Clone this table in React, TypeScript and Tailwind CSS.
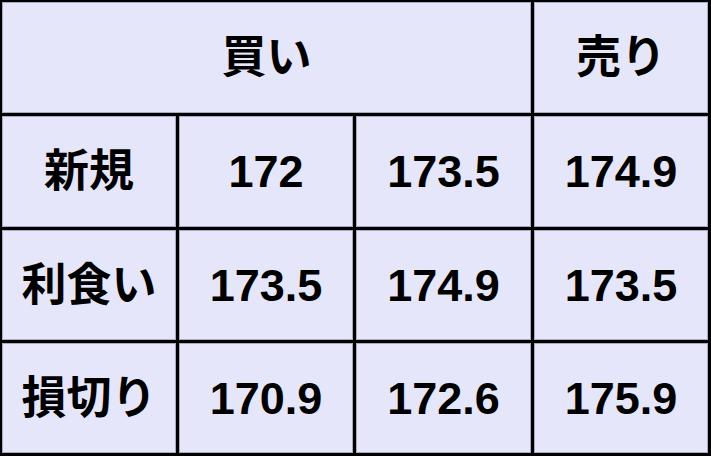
import React from "react";

const font = {
  fontFamily: '"Liberation Sans", "Noto Sans CJK JP", Arial, sans-serif',
};

function Cell({ children, span }: { children: React.ReactNode; span?: boolean }) {
  return (
    <div
      className={
        "flex items-center justify-center bg-[#e6e6fa] shadow-[inset_0_0_0_1px_#a9a9c4] text-black font-bold text-[45px] leading-none " +
        (span ? "col-span-3" : "")
      }
    >
      {children}
    </div>
  );
}

export default function App() {
  const rows = [
    ["新規", "172", "173.5", "174.9"],
    ["利食い", "173.5", "174.9", "173.5"],
    ["損切り", "170.9", "172.6", "175.9"],
  ];
  return (
    <div
      className="w-[711px] h-[456px] bg-black pt-[2px] pl-[2px] pr-[3px] pb-[3px] grid grid-cols-[174px_174px_175px_174px] grid-rows-[111px_111px_110px_110px] gap-[3px]"
      style={font}
    >
      <Cell span>買い</Cell>
      <Cell>売り</Cell>
      {rows.map((r, i) =>
        r.map((c, j) => <Cell key={i + "-" + j}>{c}</Cell>)
      )}
    </div>
  );
}
